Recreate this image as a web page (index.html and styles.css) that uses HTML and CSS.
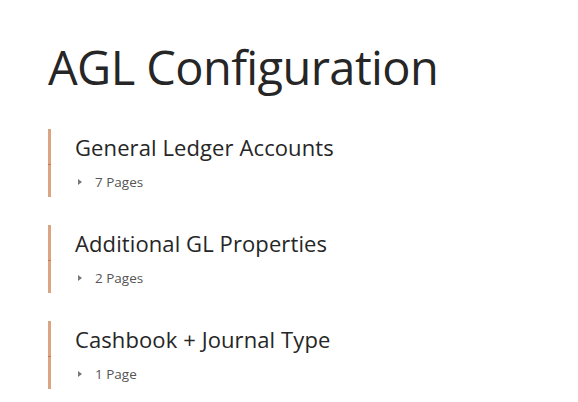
FILE: index.html
```html
<!DOCTYPE html>
<html lang="en">
<head>
  <meta charset="UTF-8" />
  <title>AGL Configuration</title>
  <link rel="stylesheet" href="styles.css">
</head>
<body>
  <h1 class="title">AGL Configuration</h1>

  <ul class="sections">
    <li class="section">
      <div class="section-name">General Ledger Accounts</div>
      <div class="section-meta"><span class="caret"></span>7 Pages</div>
    </li>
    <li class="section">
      <div class="section-name">Additional GL Properties</div>
      <div class="section-meta"><span class="caret"></span>2 Pages</div>
    </li>
    <li class="section">
      <div class="section-name">Cashbook + Journal Type</div>
      <div class="section-meta"><span class="caret"></span>1 Page</div>
    </li>
  </ul>
</body>
</html>
```

FILE: styles.css
```css
body {
  margin: 0;
  padding: 35px 0 0 48px;
  font-family: "Open Sans", "Noto Sans", sans-serif;
  color: #262626;
  background: #fff;
}
.title {
  margin: 0 0 30px;
  font-size: 47px;
  font-weight: 400;
  letter-spacing: -0.6px;
  line-height: 64px;
}
.sections {
  list-style: none;
  margin: 0;
  padding: 0;
  display: flex;
  flex-direction: column;
  gap: 28px;
}
.section {
  position: relative;
  height: 68px;
  padding-left: 24px;
  border-left: 3px solid #dba584;
  box-sizing: border-box;
}
.section::after {
  content: "";
  position: absolute;
  left: -3px;
  top: 35px;
  width: 3px;
  height: 1px;
  background: #c9794d;
}
.section-name {
  font-size: 22px;
  letter-spacing: 0.1px;
  line-height: 32px;
  padding-top: 2px;
}
.section-meta {
  display: flex;
  align-items: center;
  font-size: 13.5px;
  color: #555;
  line-height: 20px;
  margin-top: 9px;
}
.caret {
  width: 0;
  height: 0;
  border-top: 3.5px solid transparent;
  border-bottom: 3.5px solid transparent;
  border-left: 4px solid #777;
  margin: 0 13px 0 3px;
}
```
